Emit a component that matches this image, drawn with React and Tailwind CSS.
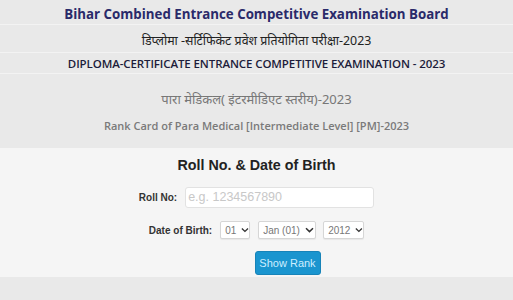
import React from "react";

const Chevron = () => (
  <svg width="9" height="6" viewBox="0 0 9 6" className="ml-[5px]">
    <path d="M1 1.2 L4.5 4.6 L8 1.2" fill="none" stroke="#333" strokeWidth="1.5" />
  </svg>
);

const Sel = ({ children, w }) => (
  <div
    className={`h-[18px] ${w} flex items-center pl-[4px] bg-white border border-[#d6d6d6] rounded-[2px] text-[10px] text-[#777] shadow-[0_1px_1px_rgba(0,0,0,0.06)]`}
    style={{ fontFamily: "'Liberation Sans', Arial, sans-serif" }}
  >
    <span>{children}</span>
    <Chevron />
  </div>
);

export default function App() {
  const hindi = "'Noto Sans', 'Noto Sans Devanagari', 'Open Sans', sans-serif";
  return (
    <div className="w-[513px] h-[300px] bg-[#e9e9e9] overflow-hidden flex flex-col">
      <div className="h-[148px] flex flex-col" style={{ fontFamily: "'Open Sans', sans-serif" }}>
        <div className="h-[25px] flex items-center justify-center border-b border-[#f3f3f3] text-[13.3px] font-bold text-[#2a2a6a] pt-[5px]">
          Bihar Combined Entrance Competitive Examination Board
        </div>
        <div className="h-[28px] flex items-center justify-center border-b border-[#f3f3f3] text-[12.4px] text-[#222] pt-[6px]" style={{ fontFamily: hindi }}>
          डिप्लोमा -सर्टिफिकेट प्रवेश प्रतियोगिता परीक्षा-2023
        </div>
        <div className="h-[21px] flex items-center justify-center border-b border-[#f3f3f3] text-[11.5px] font-semibold text-[#1c1c3a] tracking-[-0.1px] pt-[2px]">
          DIPLOMA-CERTIFICATE ENTRANCE COMPETITIVE EXAMINATION - 2023
        </div>
        <div className="h-[38px] flex items-end justify-center pb-[3px] text-[13px] text-[#777]" style={{ fontFamily: hindi }}>
          पारा मेडिकल( इंटरमीडिएट स्तरीय)-2023
        </div>
        <div className="h-[28px] flex items-center justify-center text-[11px] font-semibold text-[#7a7a7a] pt-[1px]">
          Rank Card of Para Medical [Intermediate Level] [PM]-2023
        </div>
      </div>
      <div className="h-[129px] bg-[#f5f5f5] flex flex-col items-center" style={{ fontFamily: "'Liberation Sans', Arial, sans-serif" }}>
        <div className="mt-[7px] text-[14.3px] font-bold text-[#222] leading-[20px]">Roll No. &amp; Date of Birth</div>
        <div className="mt-[12px] flex items-center gap-[8px]">
          <span className="text-[10px] font-bold text-[#333]">Roll No:</span>
          <div className="w-[189px] h-[21px] bg-white border border-[#e2e2e2] rounded-[3px] flex items-center pl-[2px] text-[12.5px] text-[#c8c8c8]">
            e.g. 1234567890
          </div>
        </div>
        <div className="mt-[13px] flex items-center">
          <span className="text-[10px] font-bold text-[#333] mr-[8px]">Date of Birth:</span>
          <Sel w="w-[30px]">01</Sel>
          <div className="w-[8px]" />
          <Sel w="w-[58px]">Jan (01)</Sel>
          <div className="w-[7px]" />
          <Sel w="w-[41px]">2012</Sel>
        </div>
        <div className="mt-[12px] ml-[62px] w-[66px] h-[24px] rounded-[3px] bg-[#1a95cf] border border-[#1783b8] flex items-center justify-center text-[11px] text-[#cdeeff]">
          Show Rank
        </div>
      </div>
    </div>
  );
}
